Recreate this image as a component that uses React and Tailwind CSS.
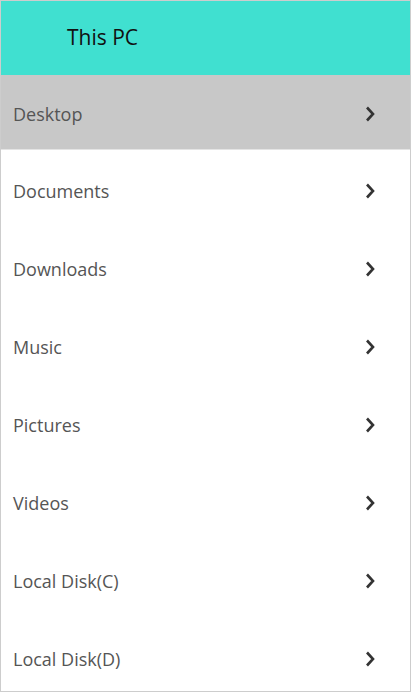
import React from "react";

const items = ["Documents", "Downloads", "Music", "Pictures", "Videos", "Local Disk(C)", "Local Disk(D)"];

function Chevron() {
  return (
    <svg width="14" height="18" viewBox="0 0 14 18" className="shrink-0">
      <path d="M4 2.5 L10 9 L4 15.5" fill="none" stroke="#333" strokeWidth="2.6" strokeLinecap="butt" strokeLinejoin="miter" />
    </svg>
  );
}

function Row({ label, active }) {
  return (
    <div
      className={`flex items-center justify-between pl-[12px] pr-[33px] pt-[4px] shrink-0 ${
        active ? "h-[75px] bg-[#c8c8c8] border-b border-[#e4e4e4]" : "h-[78px] bg-white"
      }`}
    >
      <span className="text-[18px] text-[#555]">{label}</span>
      <Chevron />
    </div>
  );
}

export default function App() {
  return (
    <div className="w-[412px] h-[694px] bg-white" style={{ fontFamily: '"Open Sans", "Noto Sans", sans-serif' }}>
      <div className="w-[411px] h-[692px] border border-[#cdcdcd] flex flex-col overflow-hidden">
        <div className="h-[74px] bg-[#40e0d0] flex items-center pl-[66px] shrink-0">
          <span className="text-[21px] text-[#111]">This PC</span>
        </div>
        <Row label="Desktop" active />
        {items.map((l) => (
          <Row key={l} label={l} />
        ))}
      </div>
    </div>
  );
}
